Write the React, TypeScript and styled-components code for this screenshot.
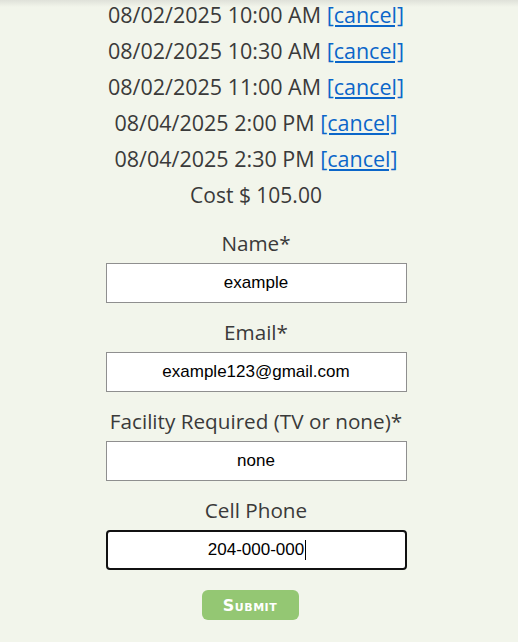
import React from 'react'
import styled, { createGlobalStyle, css } from 'styled-components'

const GlobalStyle = createGlobalStyle`
  html, body {
    margin: 0;
    padding: 0;
  }
  body {
    background: linear-gradient(#dfe1d9 0, #f2f5eb 7px) #f2f5eb;
    font-family: 'Open Sans', 'Noto Sans', sans-serif;
    color: #3a3a3a;
  }
`

const Page = styled.div`
  display: flex;
  flex-direction: column;
  align-items: center;
  padding-right: 6px;
  min-height: 642px;
`

const Slot = styled.div`
  font-size: 21.5px;
  line-height: 36px;
  height: 36px;
  margin-top: -3px;
  & + & {
    margin-top: 0;
  }
`

const CancelLink = styled.a`
  color: #0b66c9;
  text-decoration: underline;
  cursor: pointer;
`

const Cost = styled.div`
  font-size: 21px;
  line-height: 36px;
  margin-bottom: 18px;
`

const Form = styled.form`
  display: flex;
  flex-direction: column;
  align-items: center;
`

const Field = styled.div`
  display: flex;
  flex-direction: column;
  align-items: center;
  margin-bottom: 17px;
`

const Label = styled.label`
  font-size: 20.7px;
  line-height: 24px;
  margin-bottom: 8px;
`

const InputWrap = styled.div`
  position: relative;
`

const Input = styled.input<{ $focused?: boolean }>`
  display: block;
  box-sizing: border-box;
  width: 301px;
  height: 40px;
  border: 1px solid #8f8f8f;
  border-radius: 0;
  background: #fff;
  text-align: center;
  font-family: 'Liberation Sans', Arial, sans-serif;
  font-size: 17px;
  color: #000;
  outline: none;
  caret-color: transparent;
  ${(p) =>
    p.$focused &&
    css`
      border: 2px solid #111;
      border-radius: 4px;
    `}
`

const Caret = styled.span`
  position: absolute;
  top: 10px;
  left: calc(50% + 49px);
  width: 1px;
  height: 20px;
  background: #000;
  pointer-events: none;
`

const SubmitButton = styled.button`
  width: 97px;
  height: 30px;
  margin-top: 3px;
  margin-right: 12px;
  border: none;
  border-radius: 6px;
  background: #94c773;
  color: #fff;
  font-family: 'DejaVu Sans', sans-serif;
  font-weight: bold;
  font-variant: small-caps;
  font-size: 16px;
  letter-spacing: 0.5px;
  cursor: pointer;
`

const slots = [
  '08/02/2025 10:00 AM',
  '08/02/2025 10:30 AM',
  '08/02/2025 11:00 AM',
  '08/04/2025 2:00 PM',
  '08/04/2025 2:30 PM',
]

const fields = [
  { label: 'Name*', value: 'example' },
  { label: 'Email*', value: 'example123@gmail.com' },
  { label: 'Facility Required (TV or none)*', value: 'none' },
  { label: 'Cell Phone', value: '204-000-000', focused: true },
]

export default function App() {
  return (
    <>
      <GlobalStyle />
      <Page>
        {slots.map((s) => (
          <Slot key={s}>
            {s} <CancelLink>[cancel]</CancelLink>
          </Slot>
        ))}
        <Cost>Cost $ 105.00</Cost>
        <Form onSubmit={(e) => e.preventDefault()}>
          {fields.map((f) => (
            <Field key={f.label}>
              <Label>{f.label}</Label>
              <InputWrap>
                <Input defaultValue={f.value} $focused={f.focused} />
                {f.focused && <Caret />}
              </InputWrap>
            </Field>
          ))}
          <SubmitButton type='submit'>Submit</SubmitButton>
        </Form>
      </Page>
    </>
  )
}
